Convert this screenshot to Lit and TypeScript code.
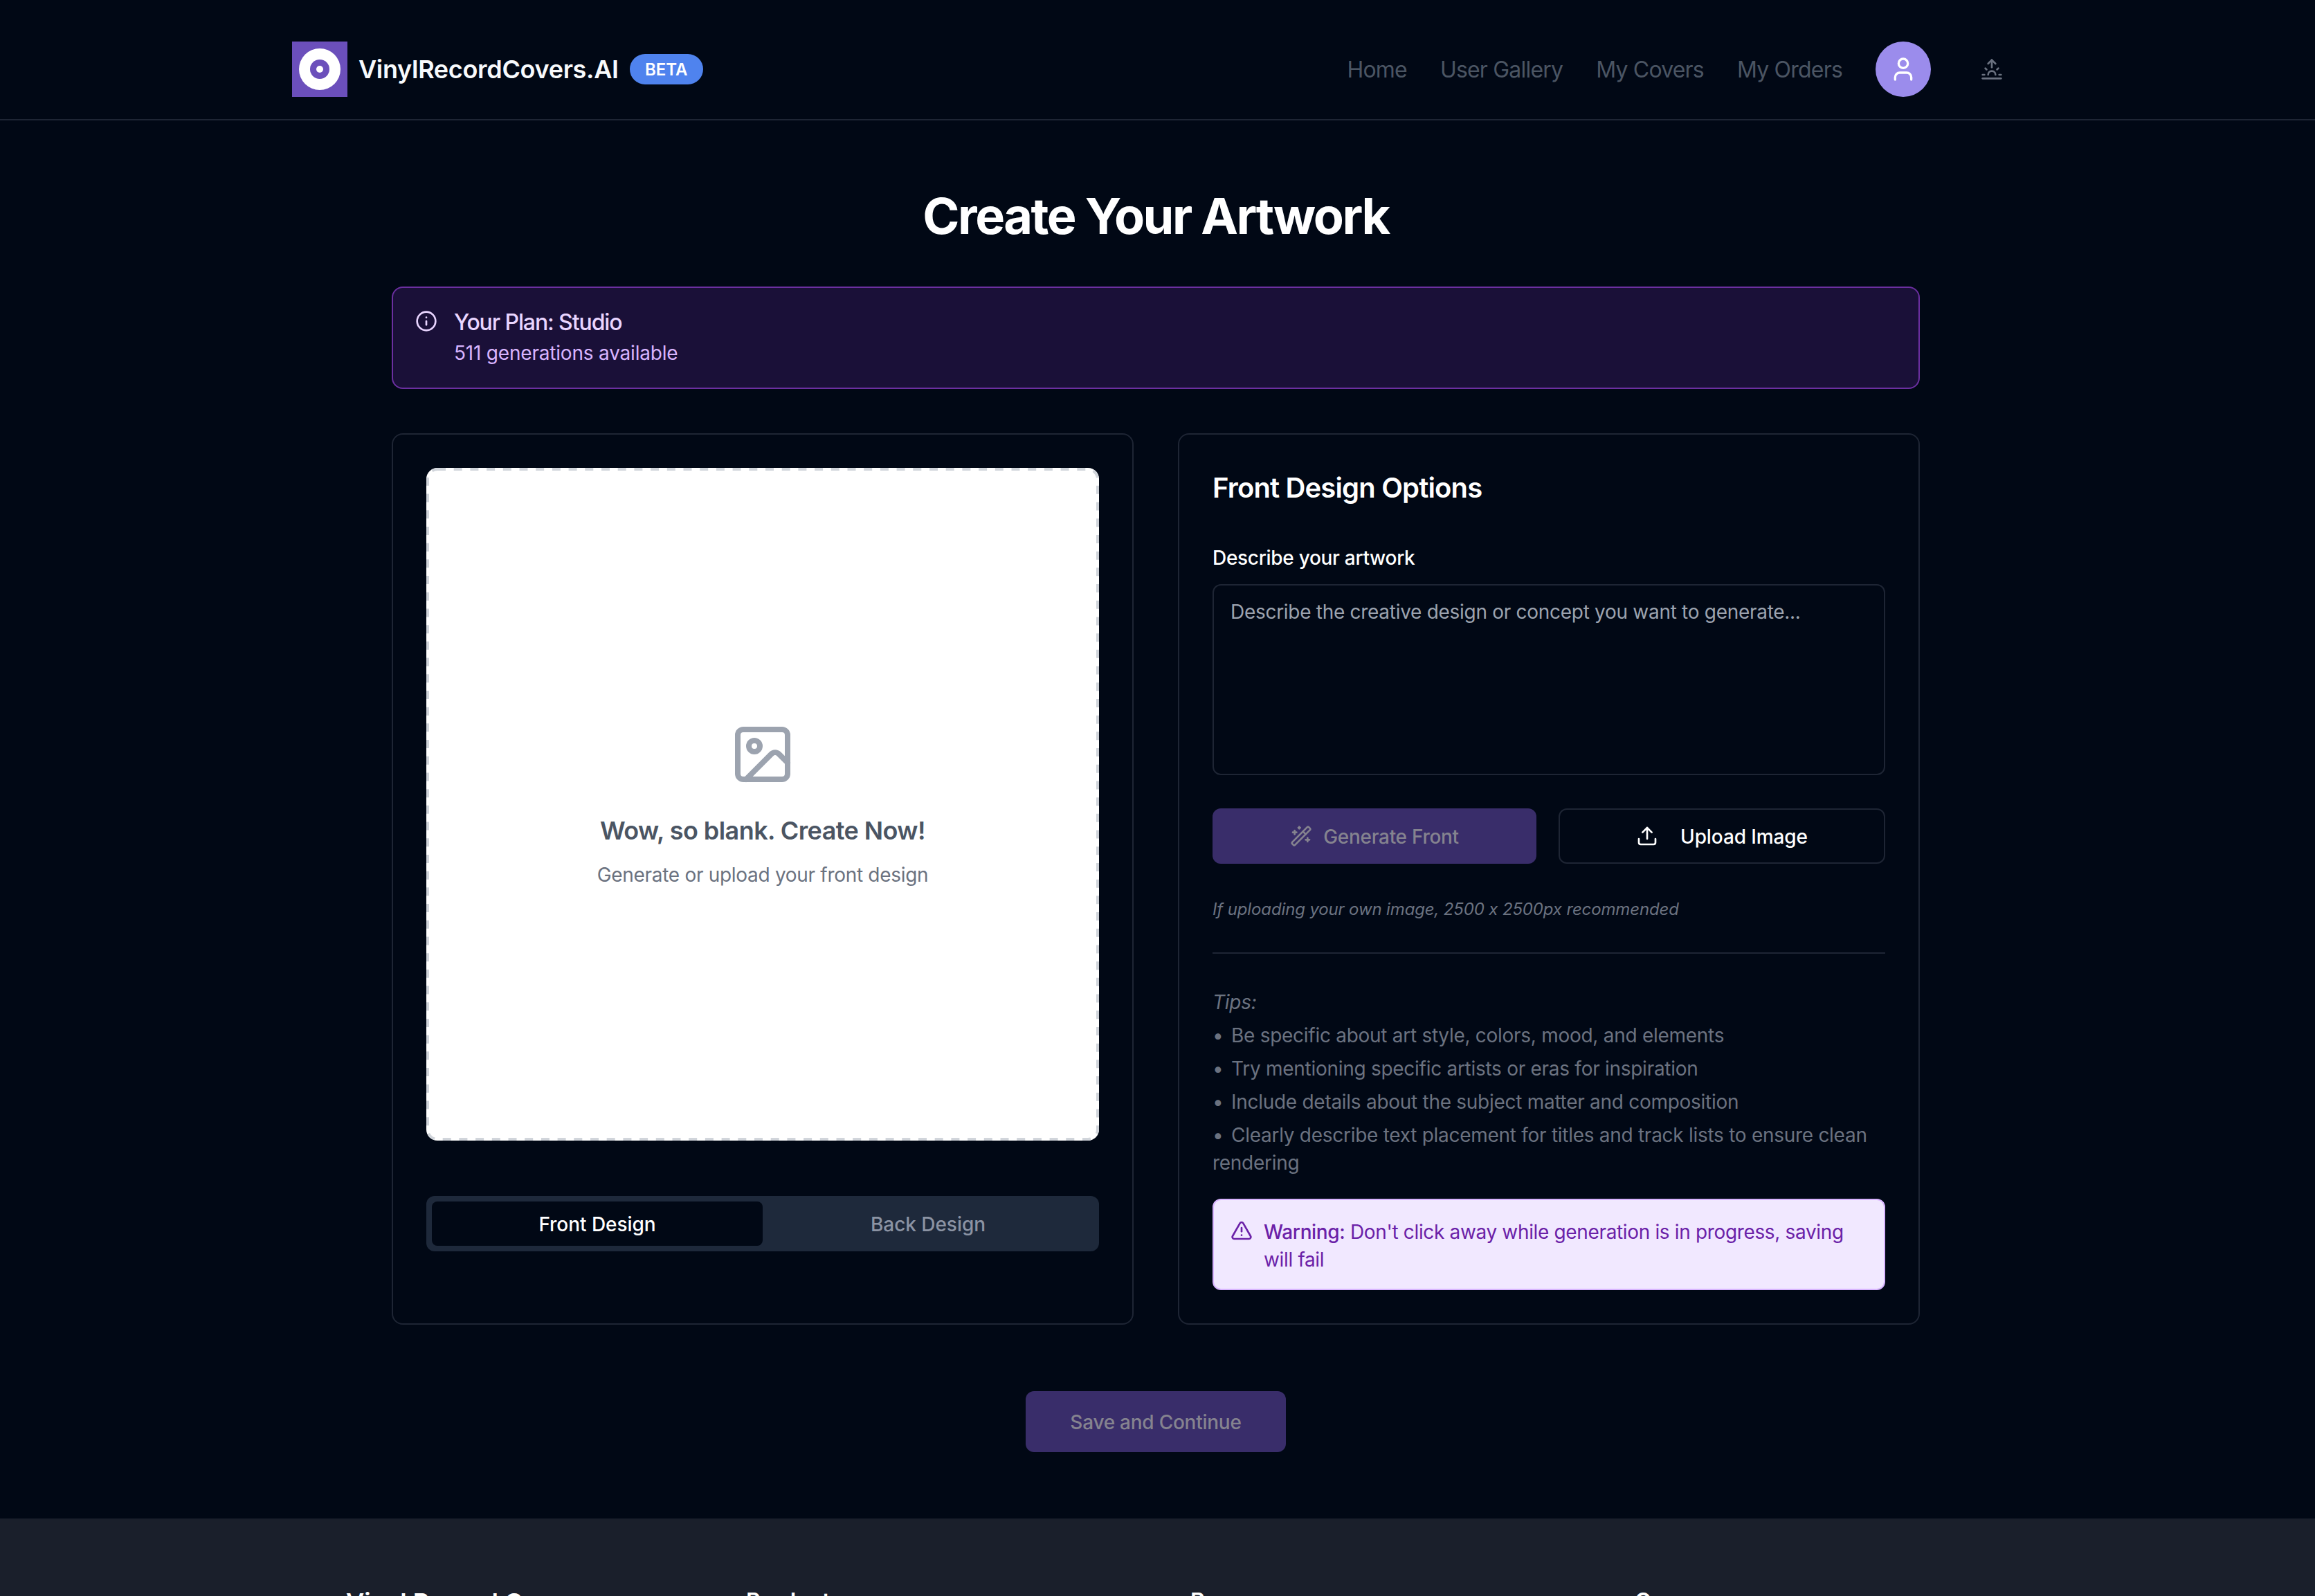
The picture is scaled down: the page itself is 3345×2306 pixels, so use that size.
import { LitElement, html, css, svg } from "lit";
import { customElement } from "lit/decorators.js";

const ic = (size: number, body: unknown, sw = 2) => html`<svg class="ic" width=${size} height=${size} viewBox="0 0 24 24" fill="none" stroke="currentColor" stroke-width=${sw} stroke-linecap="round" stroke-linejoin="round">${body}</svg>`;

@customElement("app-root")
export class AppRoot extends LitElement {
  static styles = css`
    :host { display: block; height: 100vh; overflow: hidden; background: #010815; color: #fff; font-family: Inter, "Liberation Sans", sans-serif; }
    * { box-sizing: border-box; }
    .ic { display: block; flex: none; }
    header { height: 174px; border-bottom: 2px solid #1e2534; padding: 60px 451px 32px 422px; display: flex; align-items: center; }
    .logo { width: 80px; height: 80px; background: #6b4fbb; display: flex; align-items: center; justify-content: center; flex: none; }
    .brand { margin-left: 16px; font-size: 36px; font-weight: 600; color: #f8fafc; white-space: nowrap; letter-spacing: -0.32px; }
    .beta { margin-left: 16px; height: 44px; width: 106px; border-radius: 22px; background: #4f83ee; font-size: 24px; font-weight: 600; color: #fff; display: flex; align-items: center; justify-content: center; flex: none; }
    nav { margin-left: auto; display: flex; align-items: center; gap: 48px; font-size: 32px; color: #4b5563; white-space: nowrap; letter-spacing: -0.8px; }
    .avatar { width: 80px; height: 80px; border-radius: 50%; background: #9b8cec; color: #fff; display: flex; align-items: center; justify-content: center; flex: none; }
    .sun { margin-left: 24px; color: #6b7280; }
    main { width: 2208px; margin-left: 566px; padding: 96px 0; }
    h1 { margin: 0 0 62px; padding-top: 2px; font-size: 72px; line-height: 80px; font-weight: 700; text-align: center; letter-spacing: -2.5px; }
    .plan { height: 148px; border: 2px solid #6b2fa0; border-radius: 16px; background: #1a1038; padding: 26px 32px 0; display: flex; gap: 24px; margin-bottom: 64px; color: #e9d5ff; }
    .plan .ic { margin-top: 6px; }
    .plan b { display: block; font-size: 32px; line-height: 48px; font-weight: 500; letter-spacing: -1.1px; }
    .plan span { display: block; font-size: 28px; line-height: 40px; color: #d8b4fe; letter-spacing: -0.2px; }
    .cols { display: grid; grid-template-columns: 1fr 1fr; gap: 64px; }
    .card { border: 2px solid #1e2534; border-radius: 16px; padding: 48px; }
    .canvas { position: relative; height: 972px; padding-top: 2px; background: #fff; border-radius: 16px; display: flex; flex-direction: column; align-items: center; justify-content: center; color: #9ca3af; }
    .dash { position: absolute; inset: 0; width: 100%; height: 100%; fill: none; stroke: #d1d5db; stroke-width: 4; stroke-dasharray: 12 11.7; }
    .canvas h3 { margin: 34px 0 16px; font-size: 36px; line-height: 56px; font-weight: 600; color: #4b5563; letter-spacing: -0.57px; }
    .canvas p { margin: 0; font-size: 28px; line-height: 40px; color: #6b7280; letter-spacing: -0.3px; }
    .toggle { margin-top: 80px; height: 80px; background: #1e293b; border-radius: 12px; padding: 8px; display: grid; grid-template-columns: 1fr 1fr; font-size: 28px; font-weight: 500; color: #8b93a3; letter-spacing: -0.05px; }
    .toggle div { display: flex; align-items: center; justify-content: center; border-radius: 8px; padding-top: 2px; }
    .toggle .on { background: #010815; color: #fff; }
    h2 { margin: 0 0 53px; padding-top: 1px; font-size: 40px; line-height: 56px; font-weight: 600; letter-spacing: -0.85px; }
    label { display: block; font-size: 28px; line-height: 40px; font-weight: 500; margin-bottom: 18px; letter-spacing: -0.3px; }
    .ta { height: 276px; border: 2px solid #1e2534; border-radius: 12px; padding: 18px 24px; font-size: 28px; line-height: 40px; color: #9ca3af; letter-spacing: -0.29px; }
    .btns { margin-top: 48px; display: flex; gap: 32px; }
    .btn { height: 80px; border-radius: 12px; display: flex; align-items: center; justify-content: center; font-size: 28px; font-weight: 500; }
    .btn span { padding-top: 2px; }
    .gen { width: 468px; background: #392d6a; color: #85838f; gap: 16px; letter-spacing: -0.3px; }
    .up { width: 472px; border: 2px solid #1e2534; gap: 32px; letter-spacing: -0.1px; }
    .note { margin: 50px 0 46px; font-size: 24px; line-height: 32px; font-style: italic; color: #6b7280; letter-spacing: -0.14px; font-feature-settings: "calt" 0; }
    hr { margin: 0 0 48px; border: 0; height: 2px; background: #1e2534; }
    .tips { padding-top: 2px; font-size: 28px; line-height: 40px; color: #6b7280; letter-spacing: -0.28px; }
    .tips i { display: block; margin-bottom: 8px; }
    .tips p { margin: 0 0 8px; }
    .tips p::before { content: "•"; display: inline-block; width: 27px; }
    .warn { margin-top: 32px; border: 2px solid #d8b4fe; border-radius: 12px; background: #f1e8ff; padding: 26px 24px 22px; display: flex; gap: 16px; font-size: 28px; line-height: 40px; color: #6b21a8; letter-spacing: -0.35px; }
    .warn .ic { margin-top: 2px; }
    .warn b { font-weight: 500; }
    .save { margin: 96px auto 0; padding-top: 2px; width: 376px; height: 88px; border-radius: 12px; background: #392d6a; color: #85838f; display: flex; align-items: center; justify-content: center; font-size: 28px; font-weight: 500; letter-spacing: -0.25px; }
    footer { background: #1a1f2b; padding: 100px 0 0 500px; display: grid; grid-template-columns: 578px 642px 642px 1fr; font-size: 32px; line-height: 40px; font-weight: 600; }
    .fbrand { font-size: 36px; padding-top: 1px; white-space: nowrap; }
  `;

  render() {
    return html`
      <header>
        <div class="logo">
          <svg width="60" height="60" viewBox="0 0 60 60"><circle cx="30" cy="30" r="30" fill="#fff"/><circle cx="30" cy="30" r="14" fill="#6b4fbb"/><circle cx="30" cy="30" r="5" fill="#fff"/></svg>
        </div>
        <div class="brand">VinylRecordCovers.AI</div>
        <div class="beta">BETA</div>
        <nav>
          <span>Home</span><span>User Gallery</span><span>My Covers</span><span>My Orders</span>
          <div class="avatar">${ic(40, svg`<path d="M19 21v-2a4 4 0 0 0-4-4H9a4 4 0 0 0-4 4v2"/><circle cx="12" cy="7" r="4"/>`)}</div>
          <div class="sun">${ic(32, svg`<path d="M12 2v8"/><path d="m4.93 10.93 1.41 1.41"/><path d="M2 18h2"/><path d="M20 18h2"/><path d="m19.07 10.93-1.41 1.41"/><path d="M22 22H2"/><path d="m8 6 4-4 4 4"/><path d="M16 18a4 4 0 0 0-8 0"/>`)}</div>
        </nav>
      </header>
      <main>
        <h1>Create Your Artwork</h1>
        <div class="plan">
          ${ic(32, svg`<circle cx="12" cy="12" r="10"/><path d="M12 16v-4"/><path d="M12 8h.01"/>`)}
          <div><b>Your Plan: Studio</b><span>511 generations available</span></div>
        </div>
        <div class="cols">
          <section class="card">
            <div class="canvas">
              <svg class="dash" viewBox="0 0 972 972"><rect x="2" y="2" width="968" height="968" rx="14"/></svg>
              ${ic(96, svg`<rect x="3" y="3" width="18" height="18" rx="2"/><circle cx="9" cy="9" r="2"/><path d="m21 15-3.086-3.086a2 2 0 0 0-2.828 0L6 21"/>`)}
              <h3>Wow, so blank. Create Now!</h3>
              <p>Generate or upload your front design</p>
            </div>
            <div class="toggle"><div class="on">Front Design</div><div>Back Design</div></div>
          </section>
          <section class="card">
            <h2>Front Design Options</h2>
            <label>Describe your artwork</label>
            <div class="ta">Describe the creative design or concept you want to generate...</div>
            <div class="btns">
              <div class="btn gen">${ic(32, svg`<path d="m21.64 3.64-1.28-1.28a1.21 1.21 0 0 0-1.72 0L2.36 18.64a1.21 1.21 0 0 0 0 1.72l1.28 1.28a1.2 1.2 0 0 0 1.72 0L21.64 5.36a1.2 1.2 0 0 0 0-1.72"/><path d="m14 7 3 3"/><path d="M5 6v4"/><path d="M19 14v4"/><path d="M10 2v2"/><path d="M7 8H3"/><path d="M21 16h-4"/><path d="M11 3H9"/>`)}<span>Generate Front</span></div>
              <div class="btn up">${ic(32, svg`<path d="M21 15v4a2 2 0 0 1-2 2H5a2 2 0 0 1-2-2v-4"/><polyline points="17 8 12 3 7 8"/><line x1="12" y1="3" x2="12" y2="15"/>`)}<span>Upload Image</span></div>
            </div>
            <div class="note">If uploading your own image, 2500 x 2500px recommended</div>
            <hr />
            <div class="tips">
              <i>Tips:</i>
              <p>Be specific about art style, colors, mood, and elements</p>
              <p>Try mentioning specific artists or eras for inspiration</p>
              <p>Include details about the subject matter and composition</p>
              <p>Clearly describe text placement for titles and track lists to ensure clean rendering</p>
            </div>
            <div class="warn">
              ${ic(32, svg`<path d="m21.73 18-8-14a2 2 0 0 0-3.48 0l-8 14A2 2 0 0 0 4 21h16a2 2 0 0 0 1.73-3"/><path d="M12 9v4"/><path d="M12 17h.01"/>`)}
              <div><b>Warning:</b> Don't click away while generation is in progress, saving will fail</div>
            </div>
          </section>
        </div>
        <div class="save">Save and Continue</div>
      </main>
      <footer><div class="fbrand">Vinyl Record Covers</div><div>Product</div><div>Resources</div><div>Company</div></footer>
    `;
  }
}
